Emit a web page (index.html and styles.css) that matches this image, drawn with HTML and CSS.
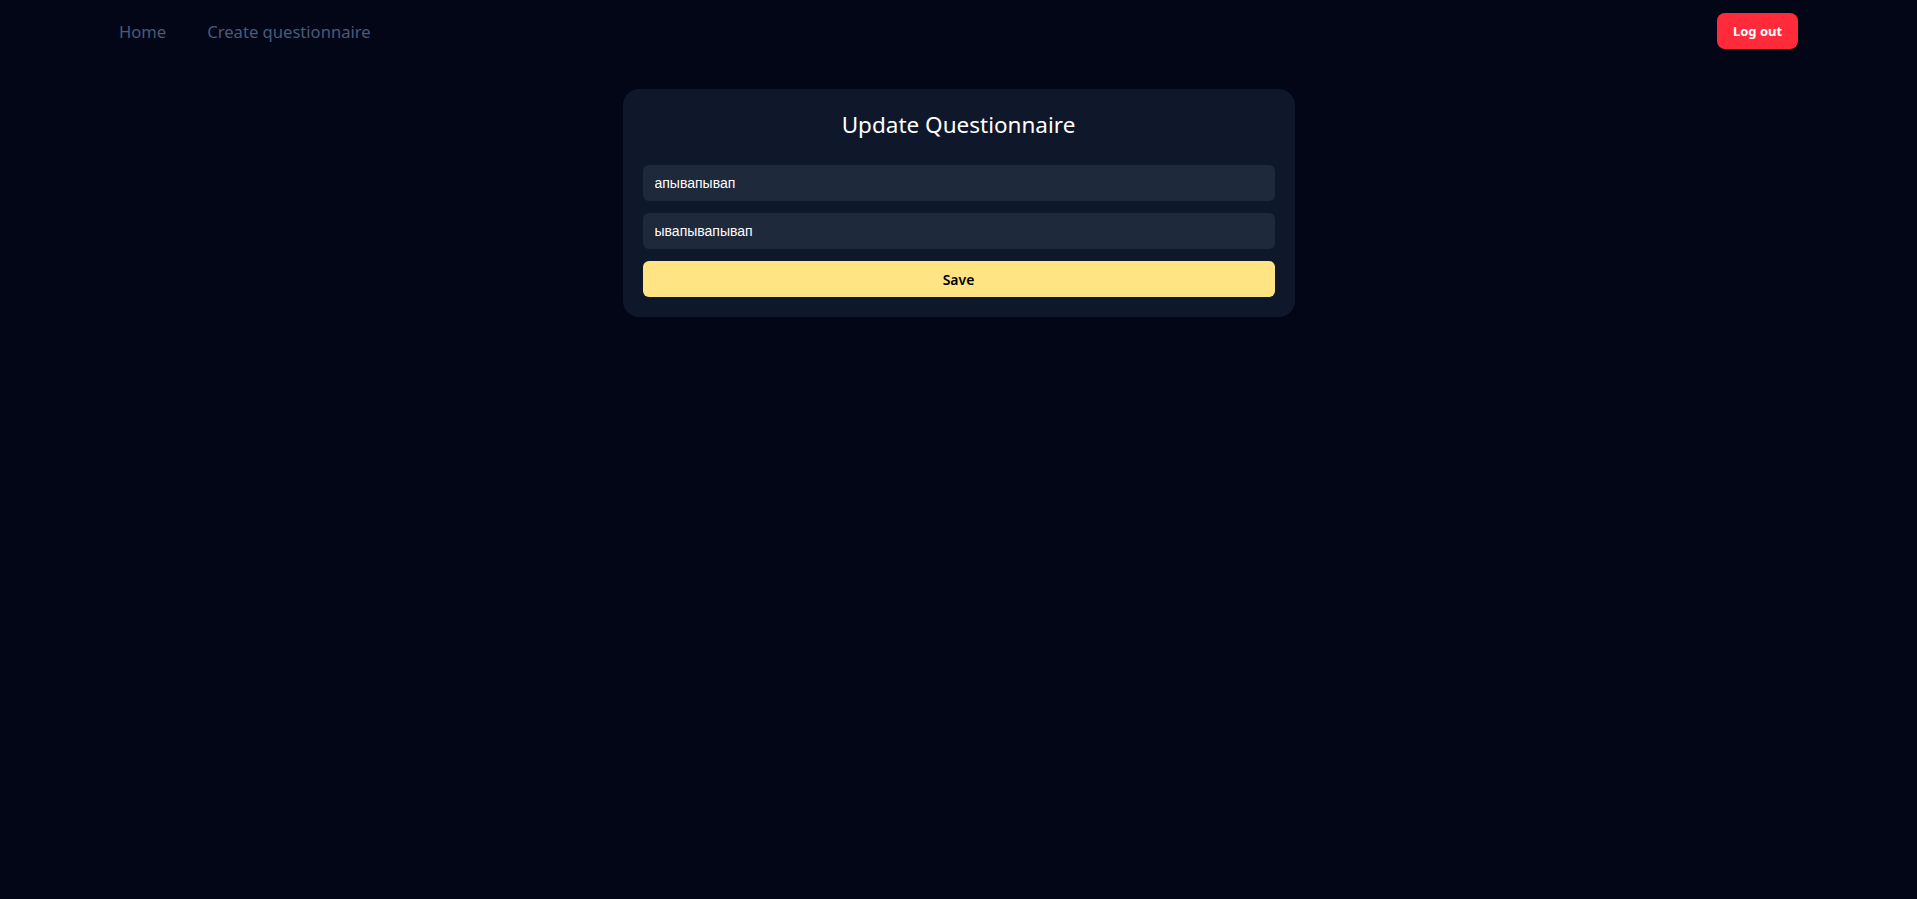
FILE: index.html
```html
<!DOCTYPE html>
<html lang="en">
<head>
<meta charset="utf-8">
<title>Update Questionnaire</title>
<link rel="stylesheet" href="styles.css">
</head>
<body>
<header class="nav">
  <nav class="nav-links">
    <a class="nav-link" href="#">Home</a>
    <a class="nav-link" href="#">Create questionnaire</a>
  </nav>
  <button class="logout" type="button">Log out</button>
</header>
<main class="main">
  <form class="card">
    <h1 class="card-title">Update Questionnaire</h1>
    <input class="field" type="text" value="апывапывап">
    <input class="field" type="text" value="ывапывапывап">
    <button class="save" type="button">Save</button>
  </form>
</main>
</body>
</html>
```
FILE: styles.css
```css
* { box-sizing: border-box; }
html, body { margin: 0; padding: 0; }
body {
  background: #020617;
  min-height: 100vh;
  font-family: "Noto Sans", "Open Sans", sans-serif;
  color: #fff;
}
.nav {
  display: flex;
  align-items: center;
  justify-content: space-between;
  padding: 13px 119px;
}
.nav-links {
  display: flex;
  gap: 41px;
}
.nav-link {
  color: #4b5a78;
  text-decoration: none;
  font-size: 16.6px;
}
.logout {
  height: 36px;
  width: 81px;
  border: none;
  border-radius: 8px;
  background: #ff2b3a;
  color: #fff;
  font-family: "Noto Sans", sans-serif;
  font-weight: 700;
  font-size: 13px;
}
.main {
  display: flex;
  justify-content: center;
  padding-top: 27px;
}
.card {
  width: 672px;
  background: #0f172a;
  border-radius: 16px;
  padding: 20px;
  display: flex;
  flex-direction: column;
  gap: 12px;
}
.card-title {
  margin: 0 0 12px;
  text-align: center;
  font-weight: 400;
  font-size: 22.5px;
  line-height: 32px;
  color: #fff;
}
.field {
  height: 36px;
  border: none;
  border-radius: 6px;
  background: #1e293b;
  color: #fff;
  padding: 0 12px;
  font-family: "Liberation Sans", Arial, sans-serif;
  font-size: 14px;
  outline: none;
}
.save {
  height: 36px;
  border: none;
  border-radius: 6px;
  background: #fee483;
  color: #000;
  font-family: "Noto Sans", sans-serif;
  font-weight: 600;
  font-size: 14px;
}
```
